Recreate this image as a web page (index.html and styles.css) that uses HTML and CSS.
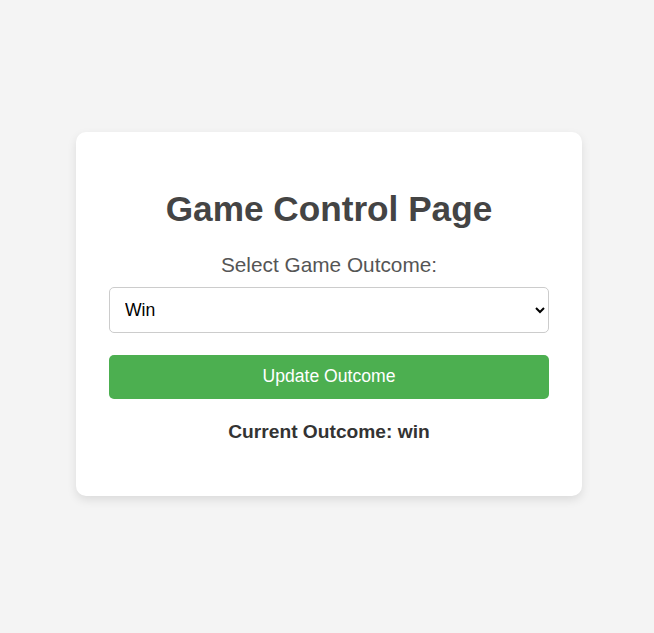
FILE: index.html
```html
<!DOCTYPE html>
<html lang="en">
<head>
<meta charset="UTF-8">
<title>Game Control Page</title>
<link rel="stylesheet" href="styles.css">
</head>
<body>
  <div class="container">
    <h1 class="title">Game Control Page</h1>
    <label class="label" for="outcome">Select Game Outcome:</label>
    <select class="select" id="outcome">
      <option value="win" selected>Win</option>
      <option value="lose">Lose</option>
    </select>
    <button class="button" type="button">Update Outcome</button>
    <p class="current">Current Outcome: win</p>
  </div>
</body>
</html>
```

FILE: styles.css
```css
html, body {
  margin: 0;
  padding: 0;
}
body {
  box-sizing: border-box;
  font-family: "Liberation Sans", Arial, sans-serif;
  background: #f4f4f4;
  height: 100vh;
  padding: 0 0 5px 4px;
  display: flex;
  justify-content: center;
  align-items: center;
}
.container {
  background: #fff;
  width: 440px;
  padding: 32px 33px;
  border-radius: 10px;
  box-shadow: 0 4px 10px rgba(0, 0, 0, 0.1);
  text-align: center;
}
.title {
  font-size: 2.2rem;
  color: #444;
  margin: 0.7em 0 0.67em;
}
.label {
  display: block;
  font-size: 1.3rem;
  color: #555;
  margin-bottom: 10px;
}
.select {
  display: block;
  width: 100%;
  font-family: inherit;
  font-size: 1.1rem;
  padding: 11px 11px;
  border: 1px solid #ccc;
  border-radius: 5px;
  background: #fff;
  color: #000;
  margin-bottom: 22px;
}
.button {
  display: block;
  width: 100%;
  font-family: inherit;
  font-size: 1.1rem;
  padding: 11.5px;
  border: none;
  border-radius: 5px;
  background: #4caf50;
  color: #fff;
  cursor: pointer;
}
.current {
  font-size: 1.2rem;
  font-weight: bold;
  color: #333;
  margin: 22px 0 21px;
}
```
